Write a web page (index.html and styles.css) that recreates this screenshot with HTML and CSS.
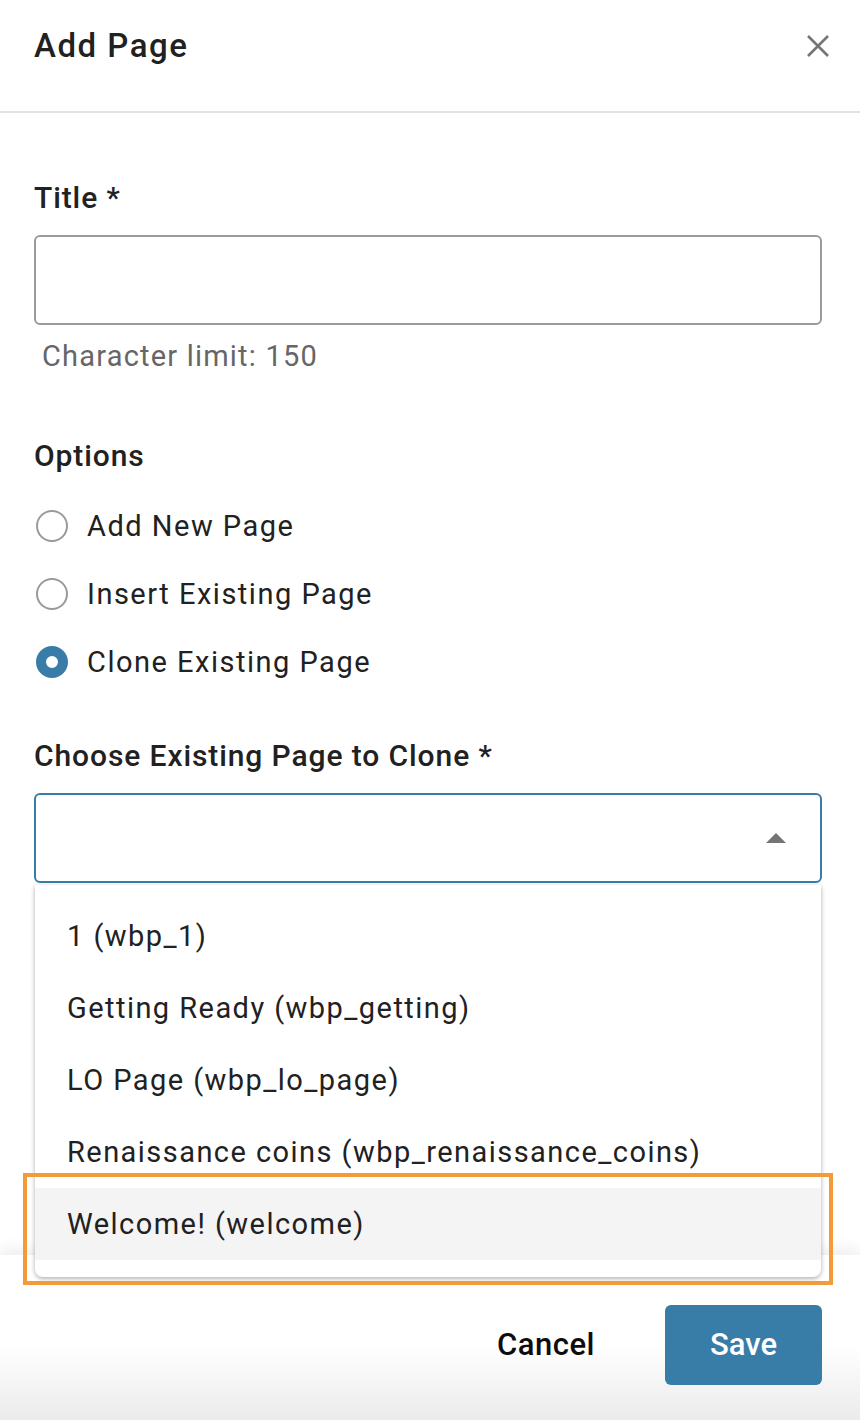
FILE: index.html
```html
<!DOCTYPE html>
<html lang="en">
<head>
<meta charset="utf-8">
<title>Add Page</title>
<link rel="stylesheet" href="styles.css">
</head>
<body>
<div class="dialog">
  <header class="dialog-header">
    <h1 class="dialog-title">Add Page</h1>
    <button class="close-btn" aria-label="Close">
      <svg viewBox="0 0 24 24" width="24" height="24"><path d="M2 2 L22 22 M22 2 L2 22" stroke="#757575" stroke-width="2.6" fill="none"/></svg>
    </button>
  </header>
  <main class="dialog-body">
    <label class="field-label label-title">Title *</label>
    <div class="text-input"></div>
    <div class="hint">Character limit: 150</div>

    <div class="field-label label-options">Options</div>
    <div class="radio-group">
      <div class="radio-row"><span class="radio"></span><span class="radio-text">Add New Page</span></div>
      <div class="radio-row"><span class="radio"></span><span class="radio-text">Insert Existing Page</span></div>
      <div class="radio-row"><span class="radio checked"></span><span class="radio-text">Clone Existing Page</span></div>
    </div>

    <div class="field-label label-clone">Choose Existing Page to Clone *</div>
    <div class="select-wrap">
      <div class="select-box"><span class="caret"></span></div>
      <ul class="menu">
        <li class="menu-item">1 (wbp_1)</li>
        <li class="menu-item">Getting Ready (wbp_getting)</li>
        <li class="menu-item">LO Page (wbp_lo_page)</li>
        <li class="menu-item">Renaissance coins (wbp_renaissance_coins)</li>
        <li class="menu-item active">Welcome! (welcome)</li>
      </ul>
      <div class="highlight-box"></div>
    </div>
  </main>
  <footer class="dialog-footer">
    <button class="btn-cancel">Cancel</button>
    <button class="btn-save">Save</button>
  </footer>
</div>
</body>
</html>
```
FILE: styles.css
```css
* { box-sizing: border-box; }
html, body { margin: 0; padding: 0; }
body {
  font-family: Roboto, "Liberation Sans", sans-serif;
  color: #212121;
  background: #fff;
  width: 860px;
  height: 1420px;
  overflow: hidden;
}
.dialog {
  width: 860px;
  height: 1420px;
  display: flex;
  flex-direction: column;
  position: relative;
}
.dialog-header {
  height: 113px;
  flex: none;
  display: flex;
  justify-content: space-between;
  align-items: flex-start;
  padding: 24px 30px 0 34px;
  border-bottom: 2px solid #e2e2e2;
}
.dialog-title {
  margin: 0;
  font-size: 33px;
  line-height: 44px;
  font-weight: 500;
  letter-spacing: 1.5px;
  color: #212121;
}
.close-btn {
  border: 0;
  background: none;
  padding: 0;
  margin-top: 10px;
  width: 24px;
  height: 24px;
  cursor: pointer;
}
.close-btn svg { display: block; }
.dialog-body {
  flex: 1;
  padding: 65px 38px 0 34px;
  position: relative;
  z-index: 2;
}
.field-label {
  display: block;
  font-size: 30px;
  line-height: 40px;
  font-weight: 500;
  letter-spacing: 0.9px;
  color: #212121;
}
.text-input {
  margin-top: 17px;
  height: 90px;
  border: 2px solid #9a9a9a;
  border-radius: 6px;
}
.hint {
  margin-top: 11px;
  padding-left: 8px;
  font-size: 29px;
  line-height: 40px;
  letter-spacing: 1.2px;
  color: #666;
}
.label-options { margin-top: 60px; }
.radio-group {
  margin-top: 16px;
  display: flex;
  flex-direction: column;
}
.radio-row {
  height: 68px;
  display: flex;
  align-items: center;
  gap: 19px;
  padding-left: 2px;
}
.radio {
  width: 32px;
  height: 32px;
  border-radius: 50%;
  border: 2px solid #9a9a9a;
  flex: none;
}
.radio.checked {
  border: 10px solid #3a7ca8;
  background: #fff;
}
.radio-text {
  font-size: 29px;
  letter-spacing: 1.5px;
  color: #212121;
}
.label-clone { margin-top: 40px; }
.select-wrap {
  margin-top: 17px;
  position: relative;
}
.select-box {
  height: 90px;
  border: 2px solid #3a7ca8;
  border-radius: 6px;
  position: relative;
}
.caret {
  position: absolute;
  right: 34px;
  top: 38px;
  width: 0;
  height: 0;
  border-left: 10px solid transparent;
  border-right: 10px solid transparent;
  border-bottom: 10px solid #757575;
}
.menu {
  position: absolute;
  left: 1px;
  right: 1px;
  top: 92px;
  margin: 0;
  padding: 15px 0 17px;
  list-style: none;
  background: #fff;
  border-radius: 0 0 8px 8px;
  box-shadow: 0 2px 4px rgba(0,0,0,0.25), 0 0 6px rgba(0,0,0,0.08);
}
.menu-item {
  height: 72px;
  display: flex;
  align-items: center;
  padding-left: 32px;
  font-size: 29px;
  letter-spacing: 1.45px;
  color: #212121;
}
.menu-item.active { background: #f4f4f4; }
.highlight-box {
  position: absolute;
  left: -11px;
  right: -11px;
  top: 380px;
  height: 112px;
  border: 4.5px solid #f29b38;
  pointer-events: none;
}
.dialog-footer {
  position: absolute;
  left: 0;
  right: 0;
  bottom: 0;
  height: 165px;
  display: flex;
  justify-content: flex-end;
  align-items: center;
  gap: 70px;
  padding: 14px 38px 0 0;
  background: linear-gradient(to bottom, #fff 55%, #ebebeb 100%);
  box-shadow: 0 -6px 14px rgba(0,0,0,0.07);
  z-index: 1;
}
.btn-cancel {
  border: 0;
  background: none;
  font-family: inherit;
  font-size: 31px;
  font-weight: 500;
  letter-spacing: 0.5px;
  color: #0d0d0d;
  padding: 0;
}
.btn-save {
  width: 157px;
  height: 80px;
  border: 0;
  border-radius: 6px;
  background: #387ca8;
  color: #fff;
  font-family: inherit;
  font-size: 31px;
  font-weight: 500;
}
```
